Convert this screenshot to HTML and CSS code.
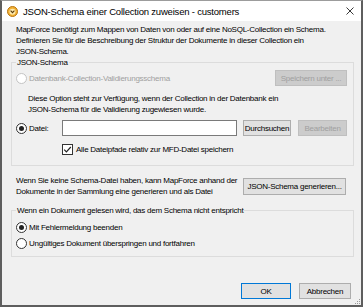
FILE: index.html
```html
<!DOCTYPE html>
<html lang="de">
<head>
    <meta charset="UTF-8">
    <title>JSON-Schema einer Collection zuweisen - customers</title>
    <link rel="stylesheet" href="styles.css">
</head>
<body>
    <div class="window">
        <div class="titlebar">
            <svg class="app-icon" width="11" height="11" viewBox="0 0 11 11">
                <circle cx="5.5" cy="5.5" r="5" fill="#f2b134" stroke="#b8740f" stroke-width="1"/>
                <circle cx="5.5" cy="5.8" r="3" fill="#fde9ad"/>
                <path d="M3.6 4.6 L5.5 6.6 L7.4 4.6" fill="none" stroke="#5a3a08" stroke-width="1.1"/>
            </svg>
            <span class="title">JSON-Schema einer Collection zuweisen - customers</span>
            <svg class="close" width="8" height="8" viewBox="0 0 8 8">
                <path d="M0.5 0.5 L7.5 7.5 M7.5 0.5 L0.5 7.5" stroke="#222" stroke-width="0.9"/>
            </svg>
        </div>

        <div class="content">
            <p class="intro">MapForce benötigt zum Mappen von Daten von oder auf eine NoSQL-Collection ein Schema.<br>Definieren Sie für die Beschreibung der Struktur der Dokumente in dieser Collection ein<br>JSON-Schema.</p>

            <fieldset class="group group-schema">
                <legend>JSON-Schema</legend>
                <div class="row">
                    <span class="option disabled"><span class="radio"></span>Datenbank-Collection-Validierungsschema</span>
                    <span class="btn disabled btn-save">Speichern unter ...</span>
                </div>
                <p class="note">Diese Option steht zur Verfügung, wenn der Collection in der Datenbank ein<br>JSON-Schema für die Validierung zugewiesen wurde.</p>
                <div class="row file-row">
                    <span class="option file-label"><span class="radio checked"></span>Datei:</span>
                    <span class="textbox"></span>
                    <span class="btn btn-browse">Durchsuchen</span>
                    <span class="btn disabled btn-edit">Bearbeiten</span>
                </div>
                <div class="check-row">
                    <svg class="checkbox" width="11" height="11" viewBox="0 0 11 11">
                        <rect x="0.5" y="0.5" width="10" height="10" fill="#fff" stroke="#333"/>
                        <path d="M2.2 5.6 L4.4 7.8 L8.8 3" fill="none" stroke="#222" stroke-width="1.2"/>
                    </svg>
                    <span>Alle Dateipfade relativ zur MFD-Datei speichern</span>
                </div>
            </fieldset>

            <div class="generate">
                <p>Wenn Sie keine Schema-Datei haben, kann MapForce anhand der<br>Dokumente in der Sammlung eine generieren und als Datei</p>
                <span class="btn btn-generate">JSON-Schema generieren...</span>
            </div>

            <fieldset class="group group-invalid">
                <legend>Wenn ein Dokument gelesen wird, das dem Schema nicht entspricht</legend>
                <div class="option radio-row"><span class="radio checked"></span>Mit Fehlermeldung beenden</div>
                <div class="option radio-row"><span class="radio"></span>Ungültiges Dokument überspringen und fortfahren</div>
            </fieldset>

            <div class="footer">
                <span class="btn btn-ok">OK</span>
                <span class="btn btn-cancel">Abbrechen</span>
            </div>
        </div>

        <svg class="grip" width="7" height="7" viewBox="0 0 7 7">
            <rect x="5" y="1" width="1" height="1" fill="#999"/>
            <rect x="3" y="3" width="1" height="1" fill="#999"/>
            <rect x="5" y="3" width="1" height="1" fill="#999"/>
            <rect x="1" y="5" width="1" height="1" fill="#999"/>
            <rect x="3" y="5" width="1" height="1" fill="#999"/>
            <rect x="5" y="5" width="1" height="1" fill="#999"/>
        </svg>
    </div>
</body>
</html>
```

FILE: styles.css
```css
* {
    box-sizing: border-box;
}
html, body {
    margin: 0;
}
body {
    font-family: "Liberation Sans", Arial, sans-serif;
    font-size: 8px;
    letter-spacing: -0.25px;
    color: #000;
    background: #fff;
}
p {
    margin: 0;
}
.window {
    position: relative;
    width: 363px;
    height: 307px;
    background: #f0f0f0;
    border: 2px solid #5e5e5e;
    border-top: 1px solid #9c9c9c;
    display: flex;
    flex-direction: column;
}
.titlebar {
    height: 20px;
    flex-shrink: 0;
    background: #fff;
    display: flex;
    align-items: center;
    padding: 0 7px 0 5px;
}
.title {
    margin-left: 5px;
    font-size: 9.5px;
    letter-spacing: -0.2px;
    flex: 1;
}
.content {
    flex: 1;
    display: flex;
    flex-direction: column;
    padding: 0 7px 0 9px;
}
.intro {
    margin: 3px 0 0 5px;
    line-height: 11px;
}
.group {
    margin: 0;
    border: 1px solid #dcdcdc;
    padding: 2px 6px 9px 4px;
    min-width: 0;
}
.group legend {
    padding: 0 1px;
    line-height: 11px;
}
.row {
    display: flex;
    align-items: center;
    height: 16px;
}
.row:first-of-type {
    justify-content: space-between;
}
.option {
    display: flex;
    align-items: center;
}
.option.disabled {
    color: #a0a0a0;
}
.radio {
    width: 11px;
    height: 11px;
    border: 1px solid #333;
    border-radius: 50%;
    background: #fff;
    margin-right: 2px;
    display: flex;
    align-items: center;
    justify-content: center;
    flex-shrink: 0;
}
.radio.checked::after {
    content: "";
    width: 5px;
    height: 5px;
    border-radius: 50%;
    background: #222;
}
.disabled .radio {
    border-color: #c4c4c4;
}
.note {
    margin: 7px 0 0 12px;
    line-height: 11px;
}
.file-row {
    margin-top: 5px;
}
.file-label {
    width: 46px;
}
.textbox {
    width: 175px;
    height: 16px;
    background: #fff;
    border: 1px solid #7a7a7a;
}
.btn {
    display: flex;
    align-items: center;
    justify-content: center;
    height: 16px;
    background: #e1e1e1;
    border: 1px solid #adadad;
    flex-shrink: 0;
}
.btn.disabled {
    background: #cccccc;
    border-color: #bfbfbf;
    color: #a0a0a0;
}
.btn-save {
    width: 72px;
}
.btn-browse {
    width: 48px;
    margin-left: 6px;
}
.btn-edit {
    width: 49px;
    margin-left: 7px;
}
.check-row {
    display: flex;
    align-items: center;
    height: 13px;
    margin: 7px 0 0 46px;
}
.checkbox {
    margin-right: 3px;
}
.generate {
    display: flex;
    align-items: center;
    justify-content: space-between;
    margin-top: 9px;
    padding: 0 8px 0 5px;
    line-height: 11px;
}
.btn-generate {
    width: 103px;
    height: 17px;
}
.group-invalid {
    margin-top: 8px;
    padding: 3px 6px 5px 4px;
}
.radio-row {
    height: 16px;
}
.footer {
    margin-top: auto;
    display: flex;
    justify-content: flex-end;
    gap: 8px;
    padding: 0 3px 6px 0;
}
.btn-ok {
    width: 50px;
    border-color: #0078d7;
}
.btn-cancel {
    width: 52px;
}
.grip {
    position: absolute;
    right: 0;
    bottom: 0;
}
```
